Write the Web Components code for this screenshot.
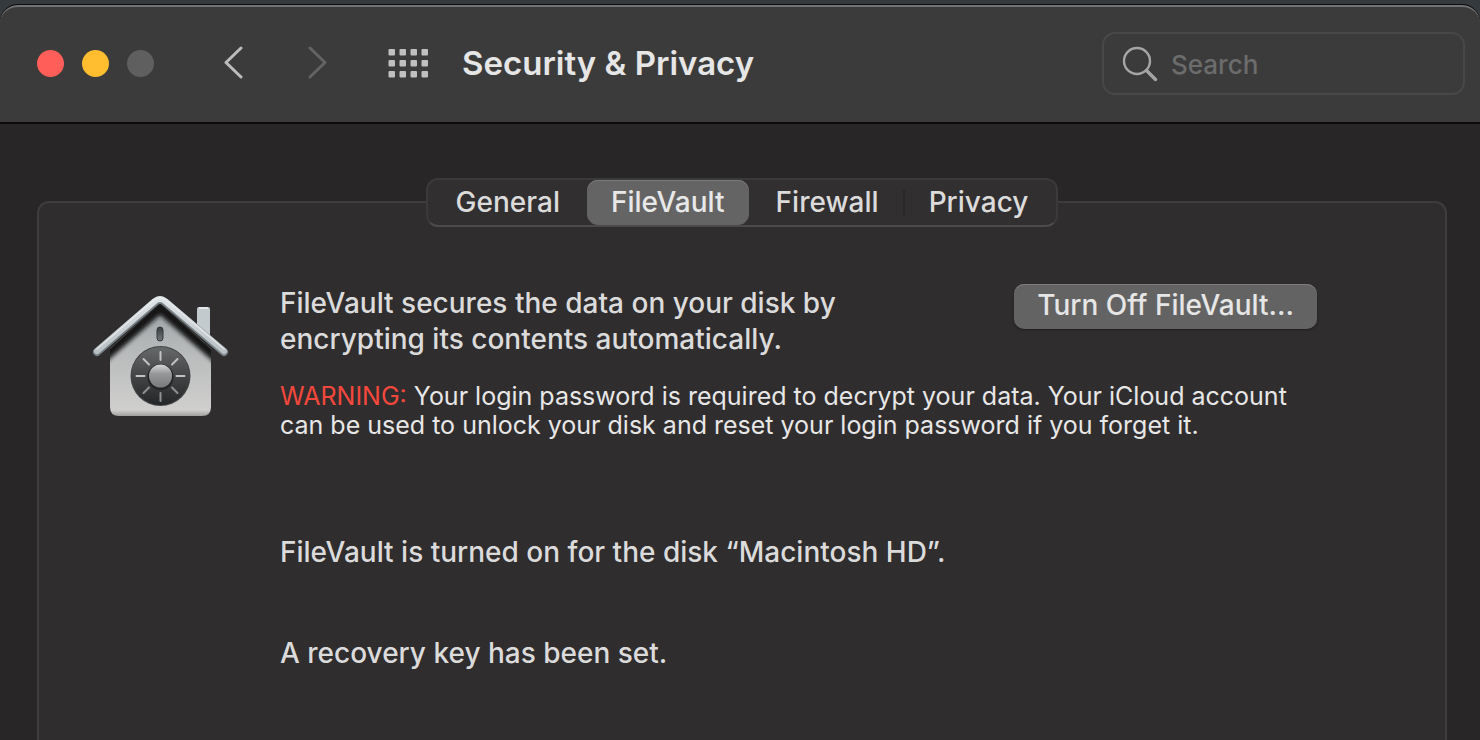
<!DOCTYPE html>
<html lang="en">
<head>
<meta charset="utf-8">
<title>Security &amp; Privacy</title>
<style>
html, body { height: 100%; }
body { margin: 0; overflow: hidden; background: #343a3d; color: #dcdbdb; font-family: Inter, "Liberation Sans", sans-serif; font-size: 28px; font-weight: 500; }
</style>
</head>
<body>
<prefs-window>
  <window-toolbar slot="toolbar" heading="Security &amp; Privacy"></window-toolbar>
  <group-box>
    <segmented-tabs slot="tabs" selected="FileVault"></segmented-tabs>
    <filevault-pane></filevault-pane>
  </group-box>
</prefs-window>

<script>
function define(name, html, setup) {
  const template = document.createElement('template');
  template.innerHTML = html;
  customElements.define(name, class extends HTMLElement {
    constructor() {
      super();
      this.attachShadow({ mode: 'open' }).append(template.content.cloneNode(true));
    }
    connectedCallback() { if (setup) setup(this, this.shadowRoot); }
  });
}

define('prefs-window', `
<style>
:host { display: flex; flex-direction: column; box-sizing: border-box; height: 100vh; padding-top: 4px; }
.frame { flex: 1; display: flex; flex-direction: column; min-height: 0; overflow: hidden; background: #282627; border-top: 1px solid #0c0d0d; border-radius: 18px 18px 0 0; }
main { flex: 1; display: flex; flex-direction: column; padding: 54px 33px 0 37px; }
</style>
<div class="frame"><slot name="toolbar"></slot><main><slot></slot></main></div>`);

define('window-toolbar', `
<style>
:host { display: block; }
header { display: flex; align-items: center; box-sizing: border-box; height: 119px; padding: 0 15px 2px 37px; background: #3b3b3b; border-top: 2px solid #737373; border-bottom: 2px solid #0b0b0b; border-radius: 18px 18px 0 0; }
button { display: block; padding: 0; border: 0; background: none; }
svg { display: block; }
nav { display: flex; align-items: center; padding-bottom: 2px; }
.grid { margin: 0 34px 0 61px; }
.next { margin-left: 63px; }
.back { margin-left: 70px; }
h1 { margin: 0; padding-bottom: 2px; flex: 1; font-size: 33px; line-height: 40px; font-weight: 600; color: #e6e6e6; white-space: nowrap; }
</style>
<header>
  <traffic-lights></traffic-lights>
  <nav aria-label="History">
    <button class="back" aria-label="Back"><svg width="20" height="34" viewBox="0 0 20 34" fill="none" stroke="#bcbcbc" stroke-width="3" stroke-linecap="round" stroke-linejoin="round"><path d="M17 2 2 16.500 17 31"/></svg></button>
    <button class="next" aria-label="Forward" disabled><svg width="20" height="34" viewBox="0 0 20 34" fill="none" stroke="#636363" stroke-width="3" stroke-linecap="round" stroke-linejoin="round"><path d="M3 2 18 16.500 3 31"/></svg></button>
  </nav>
  <button class="grid" aria-label="Show all"><svg width="40" height="32" viewBox="0 0 40 32" fill="#c0c0c0"><defs><g id="r"><rect x=".5" width="6.500" height="6.500" rx="1"/><rect x="11.500" width="6.500" height="6.500" rx="1"/><rect x="22.500" width="6.500" height="6.500" rx="1"/><rect x="33.500" width="6.500" height="6.500" rx="1"/></g></defs><use href="#r" y="1"/><use href="#r" y="12"/><use href="#r" y="23"/></svg></button>
  <h1></h1>
  <search-field></search-field>
</header>`, (host, root) => { root.querySelector('h1').textContent = host.getAttribute('heading'); });

define('traffic-lights', `
<style>
:host { display: flex; gap: 18px; }
button { width: 27px; height: 27px; padding: 0; border: 0; border-radius: 50%; background: #5f5f5f; }
.close { background: #ff5f58; }
.minimise { background: #ffbd2f; }
</style>
<button class="close" aria-label="Close"></button><button class="minimise" aria-label="Minimise"></button><button aria-label="Zoom" disabled></button>`);

define('search-field', `
<style>
:host { display: block; width: 363px; }
label { display: flex; align-items: center; gap: 13px; box-sizing: border-box; height: 63px; padding: 0 18px; border: 2px solid #484848; border-radius: 13px; }
svg { display: block; flex: none; }
input { flex: 1; min-width: 0; padding: 3px 0 0; border: 0; outline: 0; background: none; color: #dfdede; font: inherit; font-size: 26px; line-height: 36px; }
input::placeholder { color: #6c6c6c; opacity: 1; }
</style>
<label><svg width="36" height="36" viewBox="0 0 36 36" fill="none" stroke="#a5a5a5" stroke-linecap="round"><circle cx="15" cy="15" r="13" stroke-width="2.4"/><path d="M24.5 24.500 33.500 33.500" stroke-width="3.400"/></svg><input type="search" placeholder="Search" aria-label="Search"></label>`);

define('group-box', `
<style>
:host { flex: 1; display: flex; flex-direction: column; }
.tabs { display: flex; justify-content: center; z-index: 1; }
section { flex: 1; margin-top: -26px; padding: 81px 54px 0; border: 2px solid #3e3d3d; border-bottom: 0; border-radius: 12px 12px 0 0; background: #2f2d2e; }
</style>
<div class="tabs"><slot name="tabs"></slot></div>
<section><slot></slot></section>`);

define('segmented-tabs', `
<style>
:host { display: block; }
div { display: flex; align-items: center; box-sizing: border-box; height: 49px; padding: 0 4px; border: 2px solid #3b3a3a; border-bottom-color: #4c4b4b; border-radius: 12px; background: #312f30; }
button { height: 45px; padding: 0 24px 2px; border: 0; border-radius: 11px; background: none; color: #dcdbdb; font: inherit; font-size: 28px; line-height: 36px; }
button[aria-selected="true"] { margin: 0 3px; background: #656464; box-shadow: inset 0 1px #7b7a7a; color: #e8e8e8; }
i { width: 2px; height: 26px; background: #292728; }
</style>
<div role="tablist"><button role="tab">General</button><button role="tab">FileVault</button><button role="tab">Firewall</button><i></i><button role="tab">Privacy</button></div>`,
(host, root) => {
  const tabs = [...root.querySelectorAll('button')];
  const select = name => tabs.forEach(t => t.setAttribute('aria-selected', t.textContent === name));
  tabs.forEach(t => t.addEventListener('click', () => select(t.textContent)));
  select(host.getAttribute('selected'));
});

define('push-button', `
<style>
:host { display: block; }
button { display: block; height: 45px; padding: 0 23px 3px; border: 0; border-radius: 10px; background: #636363; box-shadow: inset 0 1px #7d7d7d, 0 1px 2px #1f1e1e; color: #e6e6e6; font: inherit; line-height: 36px; white-space: nowrap; }
</style>
<button><slot></slot></button>`);

define('filevault-pane', `
<style>
:host { display: grid; grid-template-columns: 138px 1fr; column-gap: 50px; margin-left: -1px; }
vault-icon { margin-top: 11px; }
.top { display: flex; justify-content: space-between; align-items: flex-start; padding-right: 74px; }
p { margin: 0; font-size: 28px; line-height: 36px; }
.lead { padding-top: 1px; white-space: nowrap; }
.warning { margin-top: 25px; font-size: 25px; line-height: 29px; font-weight: 400; color: #e8e7e7; white-space: nowrap; }
.warning b { font-weight: 400; color: #f4483d; }
.status { margin-top: 94px; }
.key { margin-top: 65px; }
</style>
<vault-icon></vault-icon>
<div>
  <div class="top">
    <p class="lead">FileVault secures the data on your disk by<br>encrypting its contents automatically.</p>
    <push-button>Turn Off FileVault…</push-button>
  </div>
  <p class="warning"><b>WARNING:</b> Your login password is required to decrypt your data. Your iCloud account<br>can be used to unlock your disk and reset your login password if you forget it.</p>
  <p class="status">FileVault is turned on for the disk “Macintosh HD”.</p>
  <p class="key">A recovery key has been set.</p>
</div>`);

define('vault-icon', `
<style>:host { display: block; } svg { display: block; overflow: visible; }</style>
<svg width="138" height="124" viewBox="0 0 138 124" role="img" aria-label="FileVault">
  <defs>
    <linearGradient id="wall" x1="0" y1="0" x2="0" y2="1"><stop offset="0" stop-color="#929a9d"/><stop offset=".4" stop-color="#b4b7b8"/><stop offset=".95" stop-color="#d0cfce"/><stop offset="1" stop-color="#a09f9f"/></linearGradient>
    <linearGradient id="roof" x1="0" y1="0" x2="0" y2="1"><stop offset="0" stop-color="#e0e5e7"/><stop offset="1" stop-color="#b9c1c4"/></linearGradient>
    <linearGradient id="dial" x1="0" y1="0" x2="0" y2="1"><stop offset="0" stop-color="#67696b"/><stop offset=".5" stop-color="#424446"/><stop offset="1" stop-color="#252627"/></linearGradient>
    <linearGradient id="knob" x1="0" y1="0" x2="0" y2="1"><stop offset="0" stop-color="#d6d7d7"/><stop offset=".4" stop-color="#969798"/><stop offset="1" stop-color="#797a7b"/></linearGradient>
    <linearGradient id="slot" x1="0" y1="0" x2="0" y2="1"><stop offset="0" stop-color="#3b3e40"/><stop offset="1" stop-color="#75797b"/></linearGradient>
    <clipPath id="house"><path d="M68 8 119 54V112Q119 121 110 121H27Q18 121 18 112V54Z"/></clipPath>
    <filter id="soft" x="-20%" y="-20%" width="140%" height="140%"><feGaussianBlur stdDeviation="2"/></filter>
  </defs>
  <path d="M27 122H111" stroke="#151414" stroke-width="4" opacity=".6" filter="url(#soft)"/>
  <path d="M105 14Q105 12 107 12H116Q118 12 118 14V46L105 34Z" fill="#c3cacd"/>
  <path d="M107 13H116" stroke="#eef1f2" stroke-width="1.500"/>
  <g clip-path="url(#house)">
    <path d="M18 0H119V121H18Z" fill="url(#wall)"/>
    <path d="M5 67 68 12 131 67" fill="none" stroke="#121819" stroke-width="12" filter="url(#soft)"/>
  </g>
  <path d="M5 57 63 7Q68 3 73 7L132 57" fill="none" stroke="#798387" stroke-width="8" stroke-linecap="round" stroke-linejoin="round"/>
  <path d="M5 56 63 6Q68 2 73 6L132 56" fill="none" stroke="url(#roof)" stroke-width="6" stroke-linecap="round" stroke-linejoin="round"/>
  <path d="M5 54 63 4Q68 1 73 4L132 54" fill="none" stroke="#edf0f1" stroke-width="1.500" stroke-linecap="round" opacity=".7"/>
  <rect x="65" y="32" width="6" height="14" rx="3" fill="url(#slot)" stroke="#33373a" stroke-width="1"/>
  <g transform="translate(-.5 0)">
  <circle cx="69" cy="81" r="30" fill="#434547"/>
  <circle cx="69" cy="81" r="29" fill="url(#dial)"/>
  <g transform="translate(0 1)" stroke="#c1c4c5" stroke-width="2" stroke-linecap="round">
    <path d="M69 56V64M45 80H53M85 80H93M52 63 57.500 68.500M86 63 80.500 68.500"/>
    <path d="M69 97V105M80.500 91.500 86 97M57.500 91.500 52 97" stroke="#8f9293"/>
  </g>
  <circle cx="69" cy="82" r="13" fill="#222425"/>
  <circle cx="69" cy="81" r="11.500" fill="url(#knob)"/>
  </g>
</svg>`);
</script>
</body>
</html>
